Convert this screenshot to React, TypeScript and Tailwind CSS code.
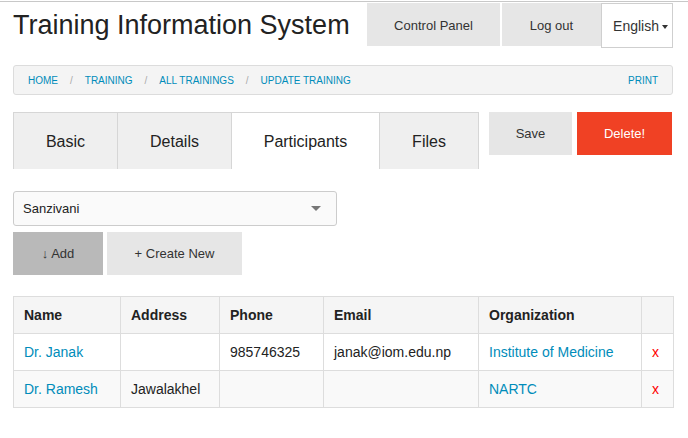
const tabs = [
    { label: "Basic", w: "w-[105px]" },
    { label: "Details", w: "w-[114px]" },
    { label: "Participants", w: "w-[148px]" },
    { label: "Files", w: "w-[99px]" },
];

const crumbs = ["HOME", "TRAINING", "ALL TRAININGS", "UPDATE TRAINING"];

const people = [
    { name: "Dr. Janak", address: "", phone: "985746325", email: "janak@iom.edu.np", org: "Institute of Medicine" },
    { name: "Dr. Ramesh", address: "Jawalakhel", phone: "", email: "", org: "NARTC" },
];

const App = () => {
    return (
        <div className="mt-px border-t border-[#c8c8c8] bg-white text-[#222] font-['Liberation_Sans',Arial,sans-serif]">
            <div className="w-[660px] ml-[13px] pt-px">
                {/* header */}
                <div className="flex items-start justify-between">
                    <h1 className="text-[27px] leading-none mt-[9px] text-[#222] font-normal">Training Information System</h1>
                    <div className="flex items-start">
                        <button className="w-[133px] h-[43px] pt-[2px] bg-[#e6e6e6] text-[13px] text-[#333]">Control Panel</button>
                        <button className="w-[99px] h-[43px] pt-[2px] ml-[2px] bg-[#e6e6e6] text-[13px] text-[#333]">Log out</button>
                        <button className="w-[72px] h-[45px] pt-[2px] border border-[#cfcfcf] bg-white text-[14px] text-[#333] flex items-center justify-end pr-[4px]">
                            English
                            <span className="ml-[3px] inline-block w-0 h-0 border-l-[3px] border-r-[3px] border-t-[4px] border-l-transparent border-r-transparent border-t-[#333]" />
                        </button>
                    </div>
                </div>

                {/* breadcrumbs */}
                <div className="mt-[17px] h-[30px] flex items-center justify-between px-[14px] bg-[#f4f4f4] border border-[#dcdcdc] rounded-[3px] text-[10px] text-[#008cba]">
                    <div className="flex items-center">
                        {crumbs.map((c, i) => (
                            <span key={c} className="flex items-center">
                                {i > 0 && <span className="mx-[12px] text-[#aaa]">/</span>}
                                <a>{c}</a>
                            </span>
                        ))}
                    </div>
                    <a>PRINT</a>
                </div>

                {/* tabs + actions */}
                <div className="mt-[17px] flex items-start">
                    <div className="flex h-[57px] border-t border-[#d6d6d6]">
                        {tabs.map((t, i) => (
                            <div
                                key={t.label}
                                className={
                                    t.label === "Participants"
                                        ? `${t.w} pt-[2px] flex items-center justify-center text-[16px] text-[#222] bg-white border-r border-[#d6d6d6]`
                                        : i === 0
                                          ? `${t.w} pt-[2px] flex items-center justify-center text-[16px] text-[#222] bg-[#efefef] border-l border-r border-[#d6d6d6]`
                                          : `${t.w} pt-[2px] flex items-center justify-center text-[16px] text-[#222] bg-[#efefef] border-r border-[#d6d6d6]`
                                }
                            >
                                {t.label}
                            </div>
                        ))}
                    </div>
                    <button className="ml-[10px] w-[83px] h-[43px] bg-[#e6e6e6] text-[13px] text-[#333]">Save</button>
                    <button className="ml-[5px] w-[95px] h-[43px] bg-[#f04124] text-[13px] text-white">Delete!</button>
                </div>

                {/* participant picker */}
                <div className="mt-[22px] w-[324px] h-[35px] flex items-center justify-between pl-[9px] pr-[15px] border border-[#cccccc] rounded-[3px] bg-[#fafafa] text-[13px] text-[#222]">
                    <span>Sanzivani</span>
                    <span className="inline-block w-0 h-0 border-l-[5px] border-r-[5px] border-t-[5px] border-l-transparent border-r-transparent border-t-[#777]" />
                </div>
                <div className="mt-[6px] flex">
                    <button className="w-[90px] h-[43px] bg-[#b9b9b9] text-[13px] text-[#333]">↓ Add</button>
                    <button className="ml-[4px] w-[135px] h-[43px] bg-[#e6e6e6] text-[13px] text-[#333]">+ Create New</button>
                </div>

                {/* participants table */}
                <table className="mt-[21px] w-[660px] table-fixed border-collapse border border-[#dddddd] text-[14px]">
                    <colgroup>
                        <col className="w-[107px]" />
                        <col className="w-[99px]" />
                        <col className="w-[104px]" />
                        <col className="w-[155px]" />
                        <col className="w-[163px]" />
                        <col className="w-[32px]" />
                    </colgroup>
                    <thead>
                        <tr className="h-[37px] bg-[#f5f5f5]">
                            {["Name", "Address", "Phone", "Email", "Organization", ""].map((h, i) => (
                                <th key={i} className="border border-[#dddddd] pl-[10px] text-left font-bold text-[#222]">{h}</th>
                            ))}
                        </tr>
                    </thead>
                    <tbody>
                        {people.map((p, i) => (
                            <tr key={p.name} className={i % 2 ? "h-[37px] bg-[#f9f9f9]" : "h-[37px] bg-white"}>
                                <td className="border border-[#dddddd] pl-[10px] text-[#008cba]">{p.name}</td>
                                <td className="border border-[#dddddd] pl-[10px]">{p.address}</td>
                                <td className="border border-[#dddddd] pl-[10px]">{p.phone}</td>
                                <td className="border border-[#dddddd] pl-[10px]">{p.email}</td>
                                <td className="border border-[#dddddd] pl-[10px] text-[#008cba]">{p.org}</td>
                                <td className="border border-[#dddddd] pl-[10px] text-[#f00]">x</td>
                            </tr>
                        ))}
                    </tbody>
                </table>
            </div>
        </div>
    );
};

export default App;
